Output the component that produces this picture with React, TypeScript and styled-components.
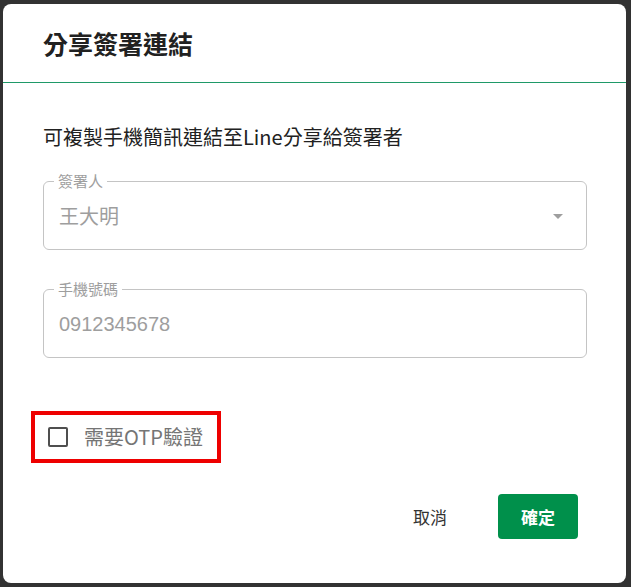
import styled, { createGlobalStyle } from "styled-components";

const GlobalStyle = createGlobalStyle`
    html, body {
        margin : 0;
        padding : 0;
        background : #323232;
    }
    body {
        font-family : "Noto Sans CJK TC", "Noto Sans", sans-serif;
    }
    * {
        box-sizing : border-box;
    }
`;

const Backdrop = styled.div`
    width : 631px;
    height : 587px;
    padding : 4px 5px 4px 3px;
    background : #323232;
`;

const Dialog = styled.div`
    height : 579px;
    background : #ffffff;
    border-radius : 8px;
    overflow : hidden;
    display : flex;
    flex-direction : column;
`;

const Header = styled.div`
    height : 78px;
    padding-left : 40px;
    display : flex;
    align-items : center;
    border-bottom : 1px solid #1f9968;
    flex-shrink : 0;
    box-sizing : content-box;
`;

const Title = styled.h2`
    margin : 0;
    font-size : 25px;
    font-weight : 700;
    color : #212121;
    line-height : 32px;
`;

const Body = styled.div`
    padding : 40px 39px 0 40px;
    display : flex;
    flex-direction : column;
`;

const Hint = styled.p`
    margin : 0;
    font-size : 20px;
    line-height : 28px;
    color : #212121;
`;

const Field = styled.div<{ $gap: number }>`
    position : relative;
    margin-top : ${p => p.$gap}px;
    height : 69px;
    border : 1px solid #c4c4c4;
    border-radius : 6px;
    padding : 0 16px 0 15px;
    display : flex;
    align-items : center;
    justify-content : space-between;
`;

const FieldLabel = styled.span`
    position : absolute;
    top : -11px;
    left : 10px;
    padding : 0 4px;
    background : #ffffff;
    font-size : 15px;
    line-height : 20px;
    color : #9e9e9e;
`;

const Value = styled.span<{ $mono?: boolean }>`
    font-family : ${p => p.$mono ? `"Liberation Sans", Arial, sans-serif` : `"Noto Sans CJK TC", sans-serif`};
    font-size : 20px;
    line-height : 28px;
    color : #9e9e9e;
`;

const ArrowIcon = styled.svg`
    width : 24px;
    height : 24px;
    fill : #9e9e9e;
    margin-top : 1px;
`;

const CheckRow = styled.label`
    margin-top : 53px;
    margin-left : -12px;
    width : 190px;
    height : 52px;
    border : 4px solid #ee0000;
    padding-left : 13px;
    display : flex;
    align-items : center;
    gap : 16px;
    cursor : pointer;
`;

const CheckBox = styled.span`
    width : 20px;
    height : 20px;
    border : 2.5px solid #4f4f4f;
    border-radius : 2px;
    flex-shrink : 0;
`;

const CheckText = styled.span`
    font-size : 20px;
    line-height : 28px;
    color : #757575;
`;

const Footer = styled.div`
    margin-top : 31px;
    padding-right : 9px;
    display : flex;
    justify-content : flex-end;
    align-items : center;
    gap : 35px;
`;

const Button = styled.button<{ $primary?: boolean }>`
    height : 45px;
    padding : 0 ${p => p.$primary ? 23 : 16}px;
    border : none;
    border-radius : 4px;
    background : ${p => p.$primary ? "#00904b" : "transparent"};
    color : ${p => p.$primary ? "#ffffff" : "#333333"};
    font-family : "Noto Sans CJK TC", sans-serif;
    font-size : 17px;
    font-weight : ${p => p.$primary ? 700 : 400};
    cursor : pointer;
`;

export default function App() {
    return (
        <>
            <GlobalStyle />
            <Backdrop>
                <Dialog>
                    <Header>
                        <Title>分享簽署連結</Title>
                    </Header>
                    <Body>
                        <Hint>可複製手機簡訊連結至Line分享給簽署者</Hint>
                        <Field $gap={30}>
                            <FieldLabel>簽署人</FieldLabel>
                            <Value>王大明</Value>
                            <ArrowIcon viewBox="0 0 24 24">
                                <path d="M7 10l5 5 5-5z" />
                            </ArrowIcon>
                        </Field>
                        <Field $gap={39}>
                            <FieldLabel>手機號碼</FieldLabel>
                            <Value $mono>0912345678</Value>
                        </Field>
                        <CheckRow>
                            <CheckBox />
                            <CheckText>需要OTP驗證</CheckText>
                        </CheckRow>
                        <Footer>
                            <Button>取消</Button>
                            <Button $primary>確定</Button>
                        </Footer>
                    </Body>
                </Dialog>
            </Backdrop>
        </>
    );
}
